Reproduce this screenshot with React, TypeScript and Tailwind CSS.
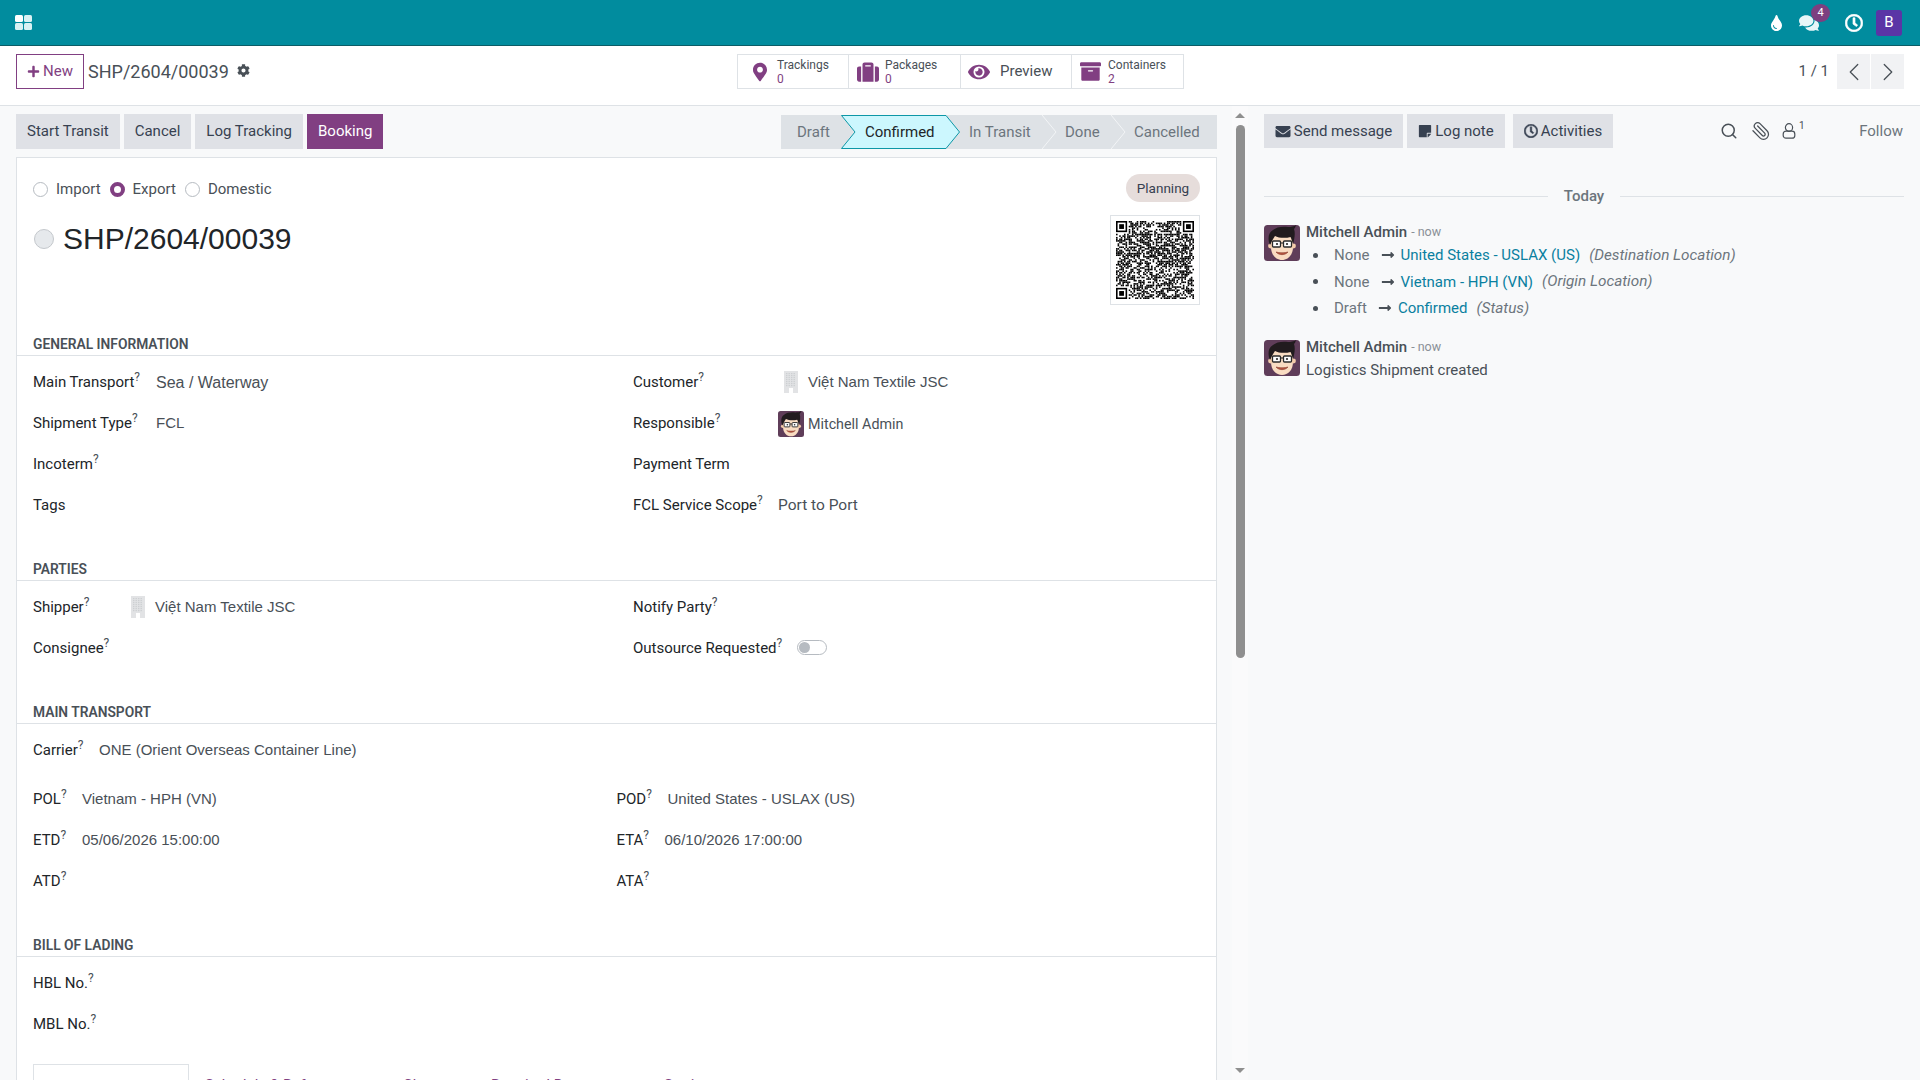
import {
  FaPlus,
  FaCog,
  FaMapMarkerAlt,
  FaSuitcase,
  FaEye,
  FaArchive,
  FaEnvelope,
  FaStickyNote,
  FaRegClock,
  FaTint,
  FaComments,
  FaLongArrowAltRight,
} from "react-icons/fa";
import { ChevronLeft, ChevronRight, Search, Paperclip } from "lucide-react";

const QR_SIZE = 49;

// pseudo random modules, the finder squares are drawn on top
function buildQr() {
  const cells: [number, number][] = [];
  let seed = 73;
  for (let y = 0; y < QR_SIZE; y++) {
    for (let x = 0; x < QR_SIZE; x++) {
      seed = (seed * 1103515245 + 12345) & 0x7fffffff;
      const inFinder =
        (x < 8 && y < 8) || (x >= QR_SIZE - 8 && y < 8) || (x < 8 && y >= QR_SIZE - 8);
      if (!inFinder && (seed >> 16) % 100 < 52) cells.push([x, y]);
    }
  }
  return cells;
}
const qrCells = buildQr();

function Finder({ x, y }: { x: number; y: number }) {
  return (
    <g>
      <rect x={x} y={y} width="7" height="7" fill="#000" />
      <rect x={x + 1} y={y + 1} width="5" height="5" fill="#fff" />
      <rect x={x + 2} y={y + 2} width="3" height="3" fill="#000" />
    </g>
  );
}

function QrCode() {
  return (
    <svg viewBox={`0 0 ${QR_SIZE} ${QR_SIZE}`} className="w-[78px] h-[78px]">
      {qrCells.map(([x, y]) => (
        <rect key={`${x}-${y}`} x={x} y={y} width="1" height="1" fill="#000" />
      ))}
      <Finder x={0} y={0} />
      <Finder x={QR_SIZE - 7} y={0} />
      <Finder x={0} y={QR_SIZE - 7} />
    </svg>
  );
}

function Avatar({ className }: { className: string }) {
  return (
    <svg viewBox="0 0 36 36" className={className}>
      <rect width="36" height="36" rx="3.5" fill="#5f3d59" />
      <path d="M7 15c0-7 5-10 11-10s11 3 11 10v7c0 8-5 13-11 13S7 30 7 22z" fill="#f9dcc2" />
      <circle cx="6.5" cy="21" r="2.4" fill="#f3cbaa" />
      <circle cx="29.5" cy="21" r="2.4" fill="#f3cbaa" />
      <path d="M6 20C3 13 5 7 9 5c3-3 10-4 15-3 3 0 6-.5 8-2-.5 2-1 3-2 4 1.500 4 .5 10-1 15-1-3-1.500-5-2.500-7-5 1.500-12 1-15.500-1C9.500 13 8 16 6 20z" fill="#211b1e" />
      <rect x="8.500" y="16" width="8" height="6" rx="1" fill="#fff" stroke="#2a2a2a" strokeWidth="1.300" />
      <rect x="19.500" y="16" width="8" height="6" rx="1" fill="#fff" stroke="#2a2a2a" strokeWidth="1.300" />
      <path d="M16.500 18h3" stroke="#2a2a2a" strokeWidth="1.100" />
      <circle cx="13" cy="19" r="1.100" fill="#2a2a2a" />
      <circle cx="23" cy="19" r="1.100" fill="#2a2a2a" />
      <path d="M12 27c3 3.500 9 3.500 12 0-3 1-9 1-12 0z" fill="#b5533f" stroke="#8a3f30" strokeWidth=".6" />
    </svg>
  );
}

function BuildingIcon() {
  const windows: number[][] = [];
  for (let y = 2; y < 15; y += 2) for (let x = 2; x < 12; x += 2.5) windows.push([x, y]);
  return (
    <svg viewBox="0 0 14 22" className="w-[14px] h-[22px] shrink-0">
      <rect width="14" height="22" fill="#e2e3e5" />
      {windows.map(([x, y]) => (
        <rect key={`${x}-${y}`} x={x} y={y} width="1.400" height="1.200" fill="#cdcfd2" />
      ))}
      <rect x="5" y="17" width="4" height="5" fill="#fff" />
    </svg>
  );
}

function AppsIcon() {
  return (
    <svg viewBox="0 0 17 15" className="w-[17px] h-[15px]">
      <rect x="0" y="0" width="8" height="7" rx="1.500" fill="#ffffff" />
      <rect x="9" y="0" width="8" height="7" rx="1.500" fill="#d9f1f3" />
      <rect x="0" y="8" width="8" height="7" rx="1.500" fill="#d9f1f3" />
      <rect x="9" y="8" width="8" height="7" rx="1.500" fill="#d9f1f3" />
    </svg>
  );
}

function FollowerIcon() {
  return (
    <svg viewBox="0 0 14 16" className="w-[14px] h-[16px]" fill="none" stroke="#495057" strokeWidth="1.200">
      <ellipse cx="7" cy="4.500" rx="3.600" ry="3.800" />
      <rect x="1.200" y="8.200" width="11.600" height="7" rx="2.800" />
    </svg>
  );
}

function Navbar() {
  return (
    <div className="h-[46px] shrink-0 bg-[#018c9e] border-b border-[#0b5c66] flex items-center pl-[15px] pr-[18px] text-white">
      <AppsIcon />
      <div className="ml-auto flex items-center">
        <FaTint className="w-[13px] h-[16px]" />
        <div className="relative ml-[16px] w-[20px]">
          <FaComments className="w-[20px] h-[18px] text-[#e6f6f7]" />
          <span className="absolute -top-[10px] left-[12px] w-[19px] h-[18px] rounded-full bg-[#7d3f80] text-[11px] leading-[17px] text-center">
            4
          </span>
        </div>
        <FaRegClock className="ml-[26px] w-[18px] h-[18px]" stroke="currentColor" strokeWidth={20} />
        <div className="ml-[13px] w-[26px] h-[26px] rounded-[3px] bg-[#5a35a6] text-[15px] flex items-center justify-center">
          B
        </div>
      </div>
    </div>
  );
}

function StatButton({ icon, label, count, last }: { icon: React.ReactNode; label: string; count: string; last?: boolean }) {
  return (
    <div className={`h-full flex items-center ${last ? "" : "border-r border-[#dee2e6]"}`}>
      {icon}
      <div className="flex flex-col text-[12px] leading-[14px]">
        <span className="text-[#495057]">{label}</span>
        <span className="text-[#813f82]">{count}</span>
      </div>
    </div>
  );
}

function ControlPanel() {
  return (
    <div className="h-[60px] shrink-0 bg-white border-b border-[#dee2e6] flex pt-[8px] pl-[16px] pr-[16px]">
      <div className="w-[721px] flex items-start">
        <button className="h-[35px] w-[68px] border border-[#813f82] text-[#813f82] text-[15px] flex items-center justify-center gap-[3px]">
          <FaPlus className="w-[13px] h-[13px]" />
          New
        </button>
        <span className="ml-[4px] h-[35px] leading-[35px] text-[18px] text-[#495057]">SHP/2604/00039</span>
        <FaCog className="ml-[8px] mt-[10px] w-[13px] h-[13px] text-[#495057]" />
      </div>
      <div className="h-[35px] w-[447px] flex border border-[#dee2e6]">
        <div className="w-[111px]">
          <StatButton
            label="Trackings"
            count="0"
            icon={<FaMapMarkerAlt className="ml-[15px] mr-[10px] w-[14px] h-[20px] text-[#813f82]" />}
          />
        </div>
        <div className="w-[112px]">
          <StatButton
            label="Packages"
            count="0"
            icon={<FaSuitcase className="ml-[7px] mr-[5px] w-[24px] h-[22px] text-[#813f82]" />}
          />
        </div>
        <div className="w-[111px] h-full flex items-center border-r border-[#dee2e6]">
          <FaEye className="ml-[7px] w-[22px] h-[20px] text-[#813f82]" />
          <span className="ml-[10px] text-[15px] text-[#495057]">Preview</span>
        </div>
        <div className="flex-1">
          <StatButton
            last
            label="Containers"
            count="2"
            icon={<FaArchive className="ml-[8px] mr-[7px] w-[21px] h-[21px] text-[#813f82]" />}
          />
        </div>
      </div>
      <div className="flex-1 flex items-start justify-end">
        <span className="h-[35px] leading-[35px] text-[15px] text-[#495057] mr-[8px]">1 / 1</span>
        <button className="w-[33px] h-[35px] bg-[#f1f2f4] flex items-center justify-center text-[#495057]">
          <ChevronLeft className="w-[30px] h-[30px]" strokeWidth={1} />
        </button>
        <button className="ml-px w-[33px] h-[35px] bg-[#f1f2f4] flex items-center justify-center text-[#495057]">
          <ChevronRight className="w-[30px] h-[30px]" strokeWidth={1} />
        </button>
      </div>
    </div>
  );
}

function StatusSep() {
  return (
    <svg viewBox="0 0 15 34" className="w-[15px] h-[34px] shrink-0">
      <polyline points="0,0 14,17 0,34" fill="none" stroke="#f3f4f6" strokeWidth="1" />
    </svg>
  );
}

function StatusBar() {
  return (
    <div className="w-[436px] h-[34px] mt-px bg-[#dee2e6] flex items-center text-[15px] text-[#6c757d]">
      <span className="w-[60px] pl-[16px]">Draft</span>
      <div className="relative w-[119px] h-[34px] shrink-0 flex items-center">
        <svg viewBox="0 0 119 34" className="absolute inset-0 w-[119px] h-[34px]">
          <polygon points="0.5,0.5 105,0.5 118.5,17 105,33.5 0.5,33.5 14,17" fill="#ccf7fe" stroke="#0d97a7" strokeWidth="1" />
        </svg>
        <span className="relative ml-[24px] text-[#212529]">Confirmed</span>
      </div>
      <span className="w-[82px] shrink-0 pl-[9px]">In Transit</span>
      <StatusSep />
      <span className="w-[54px] shrink-0 pl-[8px]">Done</span>
      <StatusSep />
      <span className="pl-[8px]">Cancelled</span>
    </div>
  );
}

function ActionBar() {
  const btn = "h-[35px] px-[11px] bg-[#dfe1e6] text-[15px] text-[#374151]";
  return (
    <div className="flex justify-between mb-[8px]">
      <div className="flex gap-[4px]">
        <button className={btn}>Start Transit</button>
        <button className={btn}>Cancel</button>
        <button className={btn}>Log Tracking</button>
        <button className="h-[35px] px-[11px] bg-[#813f82] text-[15px] text-white">Booking</button>
      </div>
      <StatusBar />
    </div>
  );
}

function Radio({ label, checked }: { label: string; checked?: boolean }) {
  return (
    <div className="flex items-center gap-[8px]">
      {checked ? (
        <span className="w-[15px] h-[15px] rounded-full border-[4px] border-[#813f82] bg-white" />
      ) : (
        <span className="w-[15px] h-[15px] rounded-full border border-[#b6bbc1] bg-white" />
      )}
      <span className="text-[15px] text-[#495057]">{label}</span>
    </div>
  );
}

function Label({ text, help = true }: { text: string; help?: boolean }) {
  return (
    <span className="text-[15px] text-[#212529] whitespace-nowrap">
      {text}
      {help && <sup className="text-[12px] text-[#495057]">?</sup>}
    </span>
  );
}

function Row({ label, help, width, children }: { label: string; help?: boolean; width: string; children?: React.ReactNode }) {
  return (
    <div className="h-[41px] flex items-center">
      <div className={`${width} shrink-0`}>
        <Label text={label} help={help} />
      </div>
      {children}
    </div>
  );
}

function Section({ title, children }: { title: string; children: React.ReactNode }) {
  return (
    <div>
      <div className="h-[26px] border-b border-[#dee2e6] pl-[16px] pt-[2px] text-[13.8px] font-semibold text-[#495057] uppercase leading-[25px]">
        {title}
      </div>
      {children}
    </div>
  );
}

const liberation = "[font-family:'Liberation_Sans',Arial,sans-serif]";

function Value({ children, big }: { children: React.ReactNode; big?: boolean }) {
  return <span className={`${liberation} pt-[2px] ${big ? "text-[16px]" : "text-[15px]"} text-[#495057]`}>{children}</span>;
}

function Sheet() {
  return (
    <div className="ml-[16px] mr-[15px] bg-white border border-b-0 border-[#dee2e6] min-h-[923px]">
      <div className="h-[172px] flex justify-between pl-[16px] pr-[16px]">
        <div className="pt-[20px]">
          <div className="flex gap-[9px]">
            <Radio label="Import" />
            <Radio label="Export" checked />
            <Radio label="Domestic" />
          </div>
          <div className="mt-[20px] h-[36px] flex items-center">
            <span className="ml-px w-[20px] h-[20px] rounded-full bg-[#e6e9ec] border border-[#c4c8cc]" />
            <span className={`${liberation} ml-[9px] text-[30px] text-[#212529]`}>SHP/2604/00039</span>
          </div>
        </div>
        <div className="pt-[16px] flex flex-col items-end">
          <span className="h-[28px] w-[74px] rounded-full bg-[#e6dddb] text-[13.5px] text-[#374151] flex items-center justify-center">
            Planning
          </span>
          <div className="mt-[13px] w-[90px] h-[90px] border border-[#dee2e6] flex items-center justify-center">
            <QrCode />
          </div>
        </div>
      </div>

      <Section title="General Information">
        <div className="grid grid-cols-[600px_1fr] pl-[16px] pt-[5px] pb-[30px]">
          <div>
            <Row label="Main Transport" width="w-[123px]">
              <Value big>Sea / Waterway</Value>
            </Row>
            <Row label="Shipment Type" width="w-[123px]">
              <Value>FCL</Value>
            </Row>
            <Row label="Incoterm" width="w-[123px]" />
            <Row label="Tags" help={false} width="w-[123px]" />
          </div>
          <div>
            <Row label="Customer" width="w-[151px]">
              <BuildingIcon />
              <div className="ml-[10px] flex">
                <Value>Việt Nam Textile JSC</Value>
              </div>
            </Row>
            <Row label="Responsible" width="w-[145px]">
              <Avatar className="mt-[2px] w-[26px] h-[26px] shrink-0" />
              <span className="ml-[4px] pt-[4px] text-[14.3px] text-[#495057]">Mitchell Admin</span>
            </Row>
            <Row label="Payment Term" help={false} width="w-[145px]" />
            <Row label="FCL Service Scope" width="w-[145px]">
              <span className="pt-[2px] text-[15.5px] text-[#495057]">Port to Port</span>
            </Row>
          </div>
        </div>
      </Section>

      <Section title="Parties">
        <div className="grid grid-cols-[600px_1fr] pl-[16px] pt-[5px] pb-[30px]">
          <div>
            <Row label="Shipper" width="w-[98px]">
              <BuildingIcon />
              <div className="ml-[10px] flex">
                <Value>Việt Nam Textile JSC</Value>
              </div>
            </Row>
            <Row label="Consignee" width="w-[98px]" />
          </div>
          <div>
            <Row label="Notify Party" width="w-[145px]" />
            <Row label="Outsource Requested" width="w-[164px]">
              <span className="w-[30px] h-[15px] rounded-full border border-[#b6bbc1] bg-white flex items-center pl-px">
                <span className="w-[11px] h-[11px] rounded-full bg-[#b6bbc1]" />
              </span>
            </Row>
          </div>
        </div>
      </Section>

      <Section title="Main Transport">
        <div className="pl-[16px] pt-[5px] pb-[30px]">
          <Row label="Carrier" width="w-[66px]">
            <Value>ONE (Orient Overseas Container Line)</Value>
          </Row>
          <div className="mt-[8px] grid grid-cols-[583.5px_1fr]">
            <div>
              <Row label="POL" width="w-[49px]">
                <Value>Vietnam - HPH (VN)</Value>
              </Row>
              <Row label="ETD" width="w-[49px]">
                <Value>05/06/2026 15:00:00</Value>
              </Row>
              <Row label="ATD" width="w-[49px]" />
            </div>
            <div>
              <Row label="POD" width="w-[51px]">
                <Value>United States - USLAX (US)</Value>
              </Row>
              <Row label="ETA" width="w-[48px]">
                <Value>06/10/2026 17:00:00</Value>
              </Row>
              <Row label="ATA" width="w-[48px]" />
            </div>
          </div>
        </div>
      </Section>

      <Section title="Bill of Lading">
        <div className="pl-[16px] pt-[5px]">
          <Row label="HBL No." width="w-[123px]" />
          <Row label="MBL No." width="w-[123px]" />
          <div className="mt-[20px] flex text-[15px] text-[#813f82]">
            <div className="w-[156px] h-[40px] border border-b-0 border-[#dee2e6] pl-[17px] pt-[10px] text-[#495057]">Cargo &amp; Packages</div>
            <div className="w-[214px] pl-[16px] pt-[10px]">Schedule &amp; References</div>
            <div className="w-[88px] pt-[10px]">Charges</div>
            <div className="w-[173px] pt-[10px]">Required Documents</div>
            <div className="pt-[10px]">Settings</div>
          </div>
        </div>
      </Section>
    </div>
  );
}

function Scrollbar() {
  return (
    <div className="w-[16px] shrink-0 bg-[#fafafb] flex flex-col items-center">
      <div className="mt-[7px] w-0 h-0 border-x-[5px] border-x-transparent border-b-[5px] border-b-[#8f8f8f]" />
      <div className="mt-[7px] w-[9px] h-[533px] rounded-full bg-[#8f8f8f]" />
      <div className="mt-auto mb-[7px] w-0 h-0 border-x-[5px] border-x-transparent border-t-[5px] border-t-[#8f8f8f]" />
    </div>
  );
}

function Change({ from, to, field }: { from: string; to: string; field: string }) {
  return (
    <li className="h-[26.5px] flex items-center">
      <span className="ml-[7px] w-[5px] h-[5px] rounded-full bg-[#495057] mr-[16px]" />
      <span className="text-[#6c757d]">{from}</span>
      <FaLongArrowAltRight className="ml-[11px] mr-[6px] w-[14px] h-[14px] text-[#495057]" />
      <span className="text-[#0a80a0]">{to}</span>
      <span className="ml-[9px] text-[15.3px] italic text-[#6c757d]">({field})</span>
    </li>
  );
}

function Author() {
  return (
    <div className="h-[15px] flex items-center">
      <span className="font-medium text-[#495057]">Mitchell Admin</span>
      <span className="ml-[4px] text-[12.5px] text-[#8a9097]">- now</span>
    </div>
  );
}

function Chatter() {
  const btn = "h-[34px] bg-[#dfe1e6] text-[15px] text-[#374151] flex items-center justify-center gap-[3px]";
  return (
    <div className="flex-1 bg-[#f8f9fa] px-[16px] pt-[8px] text-[15px]">
      <div className="flex items-center">
        <button className={`${btn} w-[139px]`}>
          <FaEnvelope className="w-[16px] h-[15px]" />
          Send message
        </button>
        <button className={`${btn} ml-[4px] w-[98px]`}>
          <FaStickyNote className="w-[14px] h-[14px]" />
          Log note
        </button>
        <button className={`${btn} ml-[8px] w-[100px]`}>
          <FaRegClock className="w-[14px] h-[14px]" stroke="currentColor" strokeWidth={20} />
          Activities
        </button>
        <Search className="ml-[107px] w-[18px] h-[18px] text-[#495057]" strokeWidth={2} />
        <Paperclip className="ml-[13px] w-[20px] h-[20px] text-[#495057] -scale-x-100" strokeWidth={1.5} />
        <span className="ml-[11px]">
          <FollowerIcon />
        </span>
        <sup className="ml-[3px] text-[10px] text-[#495057]">1</sup>
        <span className="ml-auto mr-px text-[#6c757d]">Follow</span>
      </div>

      <div className="mt-[37px] flex items-center gap-[16px]">
        <div className="flex-1 h-px bg-[#dee2e6]" />
        <span className="font-medium text-[#6c757d]">Today</span>
        <div className="flex-1 h-px bg-[#dee2e6]" />
      </div>

      <div className="mt-[17.5px] flex gap-[6px]">
        <Avatar className="w-[36px] h-[36px] shrink-0" />
        <div className="flex-1">
          <Author />
          <ul className="mt-[2px]">
            <Change from="None" to="United States - USLAX (US)" field="Destination Location" />
            <Change from="None" to="Vietnam - HPH (VN)" field="Origin Location" />
            <Change from="Draft" to="Confirmed" field="Status" />
          </ul>
        </div>
      </div>

      <div className="mt-[18.5px] flex gap-[6px]">
        <Avatar className="w-[36px] h-[36px] shrink-0" />
        <div className="flex-1">
          <Author />
          <div className="mt-[4px] text-[#495057]">Logistics Shipment created</div>
        </div>
      </div>
    </div>
  );
}

export default function App() {
  return (
    <div className="h-screen overflow-hidden flex flex-col font-['Roboto',sans-serif]">
      <Navbar />
      <ControlPanel />
      <div className="flex-1 flex min-h-0">
        <div className="w-[1232px] shrink-0 bg-[#f8f9fa] overflow-hidden">
          <div className="pt-[8px] pl-[16px] pr-[15px]">
            <ActionBar />
          </div>
          <Sheet />
        </div>
        <Scrollbar />
        <Chatter />
      </div>
    </div>
  );
}
